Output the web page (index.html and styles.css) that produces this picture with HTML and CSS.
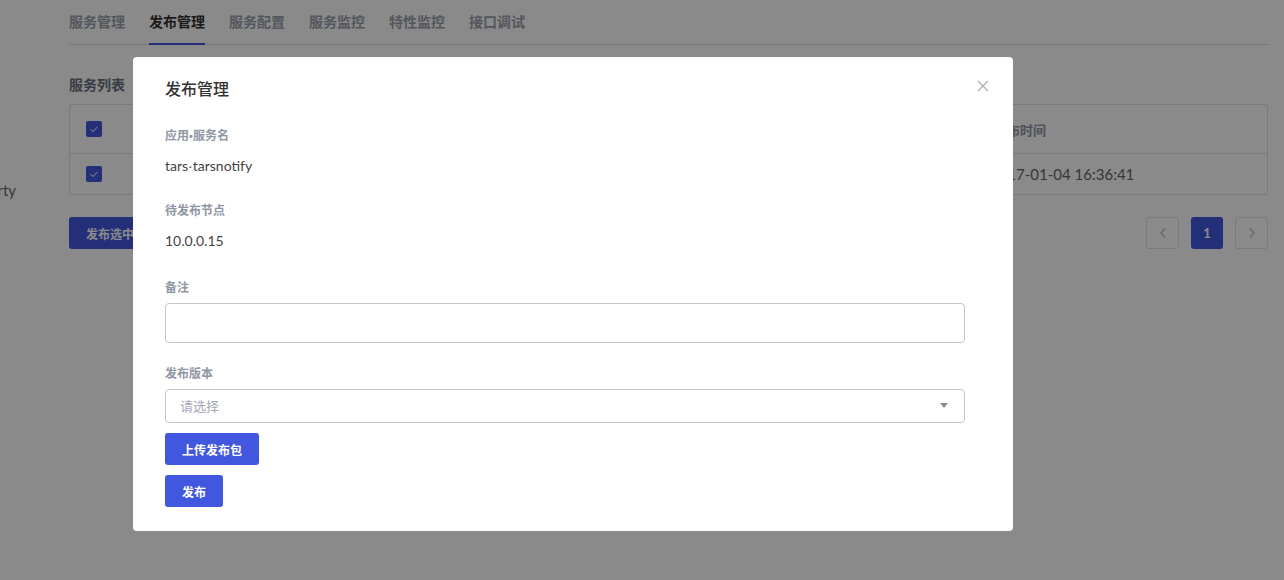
FILE: index.html
```html
<!DOCTYPE html>
<html lang="zh-CN">
<head>
    <meta charset="UTF-8">
    <meta name="viewport" content="width=device-width, initial-scale=1.0">
    <title>发布管理</title>
    <link rel="stylesheet" href="styles.css">
</head>
<body>
    <div class="page">
        <div class="sidebar">
            <div class="side-item">Property</div>
        </div>

        <div class="main">
            <div class="tabs">
                <div class="tab">服务管理</div>
                <div class="tab active">发布管理</div>
                <div class="tab">服务配置</div>
                <div class="tab">服务监控</div>
                <div class="tab">特性监控</div>
                <div class="tab">接口调试</div>
            </div>

            <h3 class="section-title">服务列表</h3>

            <div class="table">
                <div class="row head">
                    <div class="cell"><span class="checkbox"><svg width="16" height="16" viewBox="0 0 16 16"><path d="M4.5 8.2 L7 10.5 L11.5 5.8" stroke="#c9cff5" stroke-width="1.2" fill="none"/></svg></span></div>
                    <div class="cell">节点</div>
                    <div class="cell">发布时间</div>
                </div>
                <div class="row">
                    <div class="cell"><span class="checkbox"><svg width="16" height="16" viewBox="0 0 16 16"><path d="M4.5 8.2 L7 10.5 L11.5 5.8" stroke="#c9cff5" stroke-width="1.2" fill="none"/></svg></span></div>
                    <div class="cell">10.0.0.15</div>
                    <div class="cell">2017-01-04 16:36:41</div>
                </div>
            </div>

            <div class="toolbar">
                <button class="btn">发布选中节点</button>
                <div class="pager">
                    <span class="page-btn"><svg width="8" height="12" viewBox="0 0 8 12"><path d="M6 1.5 L2 6 L6 10.5" stroke="#c0c4cc" stroke-width="1.5" fill="none"/></svg></span>
                    <span class="page-btn current">1</span>
                    <span class="page-btn"><svg width="8" height="12" viewBox="0 0 8 12"><path d="M2 1.5 L6 6 L2 10.5" stroke="#c0c4cc" stroke-width="1.5" fill="none"/></svg></span>
                </div>
            </div>
        </div>
    </div>

    <div class="overlay">
        <div class="modal">
            <div class="modal-head">
                <h2 class="modal-title">发布管理</h2>
                <span class="close">
                    <svg width="12" height="12" viewBox="0 0 12 12">
                        <path d="M1 1 L11 11 M11 1 L1 11" stroke="#a9abb2" stroke-width="1.1" fill="none"/>
                    </svg>
                </span>
            </div>

            <div class="field">
                <div class="label">应用<span class="dot">•</span>服务名</div>
                <div class="value">tars<span class="mid">·</span>tarsnotify</div>
            </div>

            <div class="field">
                <div class="label">待发布节点</div>
                <div class="value">10.0.0.15</div>
            </div>

            <div class="field note">
                <div class="label">备注</div>
                <input class="input" type="text">
            </div>

            <div class="field version">
                <div class="label">发布版本</div>
                <div class="select">
                    <span class="placeholder">请选择</span>
                    <span class="arrow"></span>
                </div>
            </div>

            <button class="btn upload">上传发布包</button>
            <button class="btn publish">发布</button>
        </div>
    </div>
</body>
</html>
```

FILE: styles.css
```css
body {
    margin: 0;
    font-family: "Lato", "Noto Sans CJK SC", sans-serif;
    color: #333;
    background-color: #fff;
}

.page {
    display: flex;
    height: 580px;
}

.sidebar {
    width: 16px;
    overflow: hidden;
    display: flex;
    justify-content: flex-end;
    padding-top: 180px;
}

.side-item {
    white-space: nowrap;
    font-size: 15px;
    line-height: 20px;
    color: #666;
    height: 22px;
}

.main {
    flex: 1;
    padding: 12px 16px 0 53px;
}

.tabs {
    display: flex;
    gap: 24px;
    height: 32px;
    border-bottom: 1px solid #d7dae2;
}

.tab {
    font-size: 14px;
    font-weight: bold;
    line-height: 20px;
    color: #9a9fab;
    height: 31px;
}

.tab.active {
    color: #333;
    border-bottom: 2px solid #4157e0;
}

.section-title {
    margin: 30px 0 9px;
    font-size: 14px;
    line-height: 20px;
    color: #6b7080;
}

.table {
    border: 1px solid #dfe2e8;
    border-radius: 2px;
}

.row {
    display: grid;
    grid-template-columns: 56px 1fr 283px;
    height: 40px;
    align-items: center;
    font-size: 15px;
    color: #666;
}

.row.head {
    height: 48px;
    border-bottom: 1px solid #dfe2e8;
    font-size: 13px;
    font-weight: bold;
    color: #9096a3;
}

.cell {
    padding-left: 16px;
}

.cell:last-child {
    padding-left: 6px;
}

.head .cell:last-child {
    padding-left: 10px;
}

.checkbox {
    display: block;
    width: 16px;
    height: 16px;
    border-radius: 2px;
    background-color: #4157e0;
}

.checkbox svg {
    display: block;
}

.toolbar {
    display: flex;
    justify-content: space-between;
    margin-top: 22px;
}

.btn {
    height: 32px;
    padding: 0 17px;
    font-family: inherit;
    font-size: 12px;
    font-weight: bold;
    color: #fff;
    background-color: #4157e0;
    border: none;
    border-radius: 3px;
}

.pager {
    display: flex;
    gap: 12px;
}

.page-btn {
    width: 31px;
    height: 30px;
    border: 1px solid #dfe2e8;
    border-radius: 3px;
    display: flex;
    align-items: center;
    justify-content: center;
}

.page-btn.current {
    width: 32px;
    height: 32px;
    border: none;
    background-color: #4157e0;
    color: #fff;
    font-size: 13px;
    font-weight: bold;
}

/* modal */
.overlay {
    position: fixed;
    inset: 0;
    background-color: rgba(0, 0, 0, 0.46);
    display: flex;
    align-items: flex-start;
    padding: 57px 0 0 133px;
}

.modal {
    width: 880px;
    box-sizing: border-box;
    padding: 20px 48px 24px 32px;
    background-color: #fff;
    border-radius: 4px;
    display: flex;
    flex-direction: column;
    align-items: flex-start;
}

.modal-head {
    display: flex;
    justify-content: space-between;
    align-items: center;
    width: 100%;
}

.modal-title {
    margin: 0;
    font-size: 16px;
    font-weight: 500;
    line-height: 24px;
    color: #333;
}

.close {
    display: flex;
    margin-right: -24px;
    margin-top: -6px;
}

.field {
    width: 100%;
    margin-top: 25px;
}

.field.note {
    margin-top: 27px;
}

.field.version {
    margin-top: 21px;
}

.label {
    font-size: 12px;
    font-weight: bold;
    line-height: 20px;
    color: #9096a3;
}

.dot {
    font-family: "Liberation Sans", sans-serif;
    font-size: 11px;
}

.value {
    margin-top: 10px;
    font-size: 14px;
    line-height: 20px;
    color: #444;
}

.mid {
    font-family: "Liberation Sans", sans-serif;
}

.note .label,
.version .label {
    margin-bottom: 5px;
}

.input {
    display: block;
    box-sizing: border-box;
    width: 100%;
    height: 40px;
    border: 1px solid #c4c7d0;
    border-radius: 4px;
}

.select {
    box-sizing: border-box;
    width: 100%;
    height: 34px;
    border: 1px solid #c4c7d0;
    border-radius: 4px;
    display: flex;
    align-items: center;
    justify-content: space-between;
    padding: 0 16px 1px 14px;
}

.placeholder {
    font-size: 13px;
    color: #a3a7b3;
}

.arrow {
    width: 0;
    height: 0;
    border-left: 4px solid transparent;
    border-right: 4px solid transparent;
    border-top: 5px solid #888b96;
}

.btn.upload {
    margin-top: 10px;
}

.btn.publish {
    margin-top: 10px;
}
```
